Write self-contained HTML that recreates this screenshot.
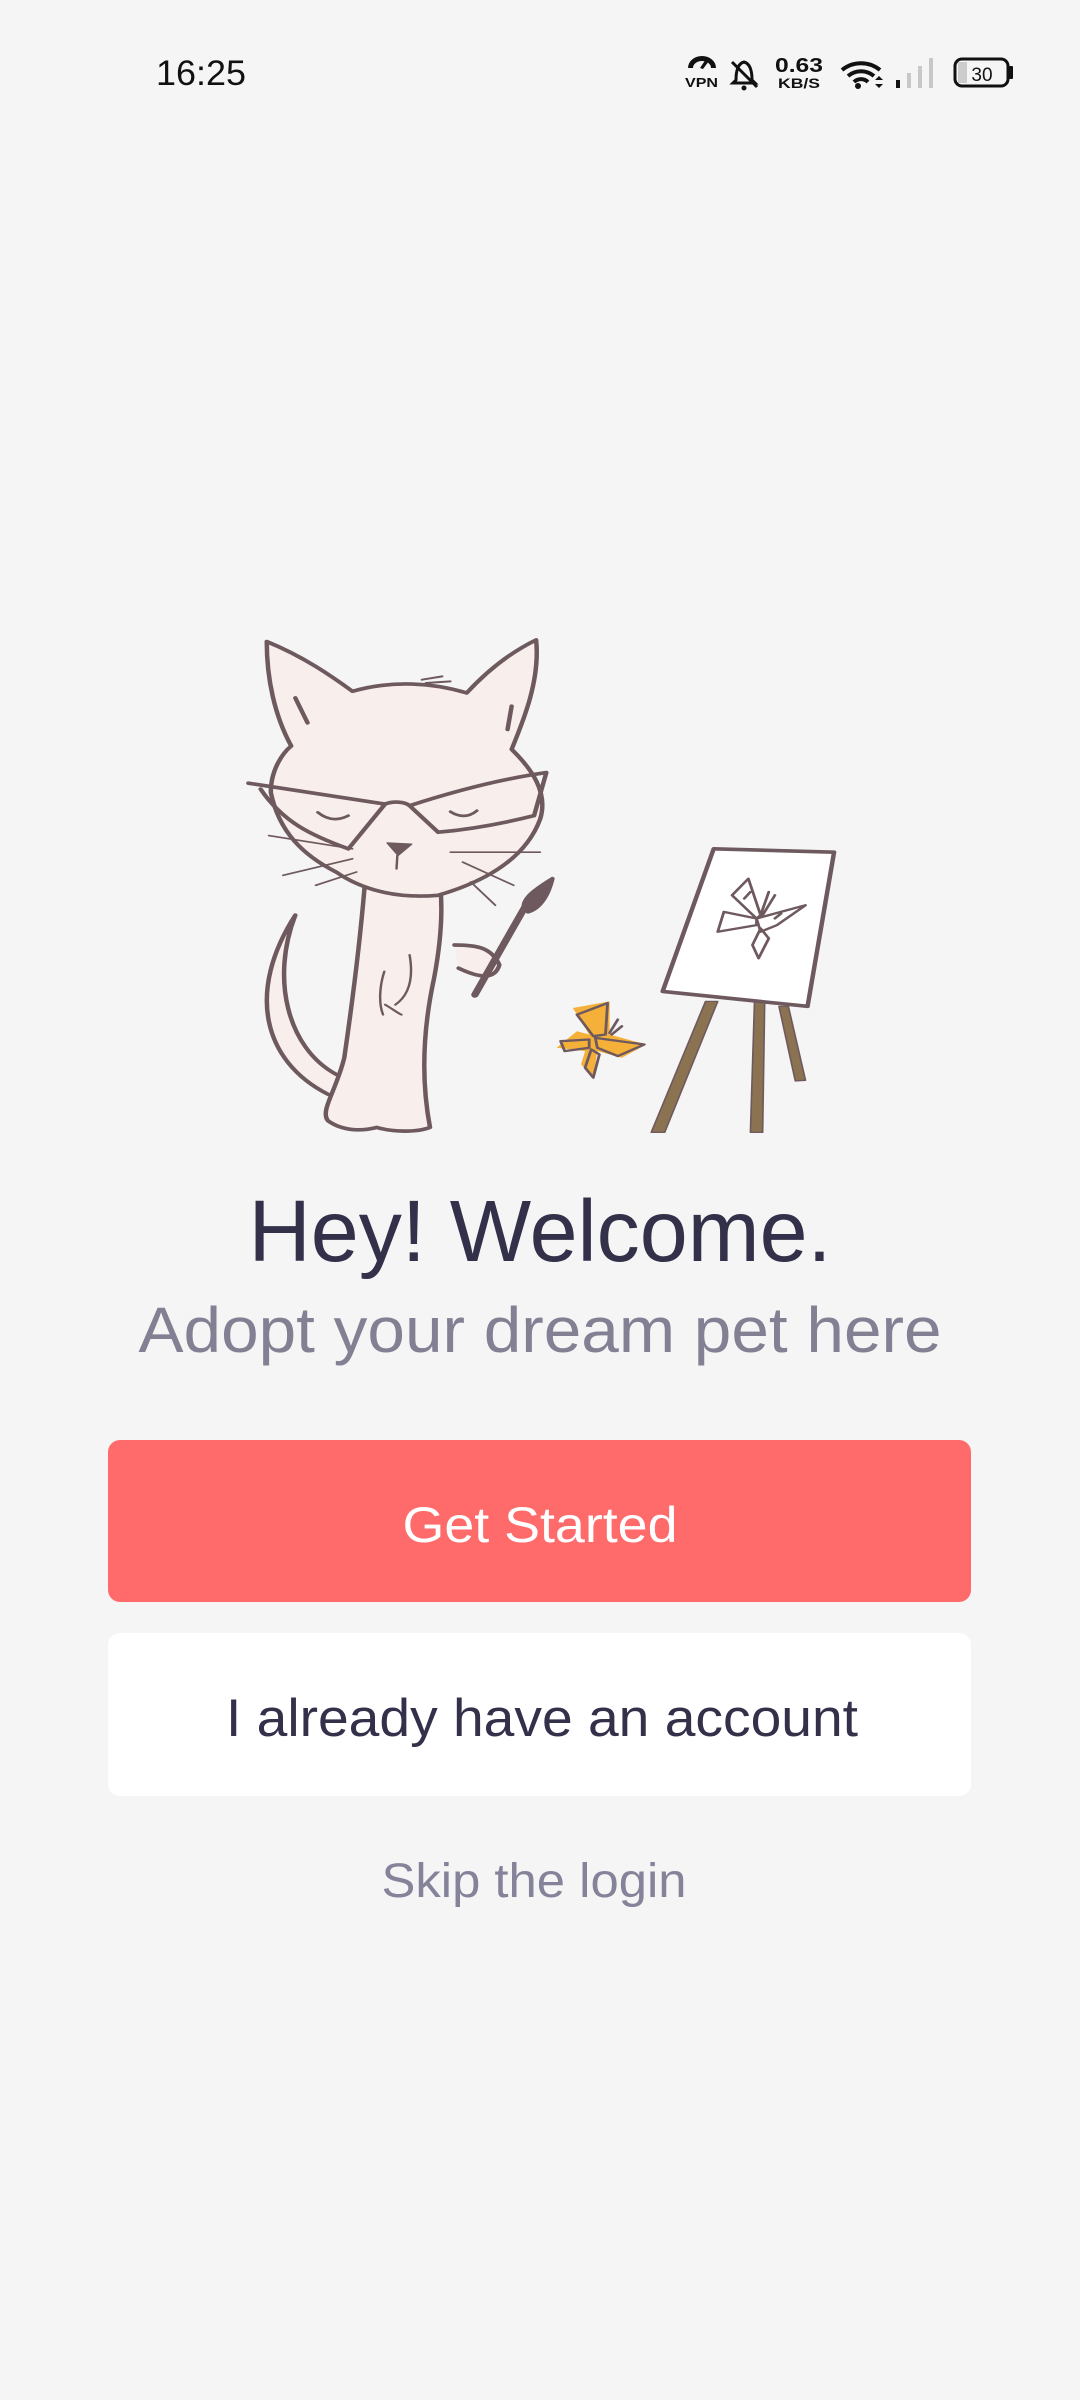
<!DOCTYPE html>
<html><head><meta charset="utf-8"><style>
html,body{margin:0;padding:0;background:#f5f5f5;width:1080px;height:2400px;overflow:hidden}
svg{position:absolute;left:0;top:0}
</style></head><body>
<svg width="1080" height="2400" viewBox="0 0 1080 2400" xmlns="http://www.w3.org/2000/svg" style="font-family:'Liberation Sans','DejaVu Sans',sans-serif">
<text x="156" y="85" font-size="35" fill="#111" textLength="90" lengthAdjust="spacingAndGlyphs">16:25</text>
<g fill="#111">
<path d="M688 68 a14 12 0 0 1 28 0 l-5 0 a9 7 0 0 0 -18 0z"/>
<path d="M700 68 l6 -9 l3 2 l-6 8z"/>
<text x="685" y="87" font-size="13" font-weight="bold" textLength="33" lengthAdjust="spacingAndGlyphs">VPN</text>
<path d="M736 80 q0 -16 8 -18 q8 2 8 18 l3 3 h-22z" fill="none" stroke="#111" stroke-width="3"/>
<line x1="732" y1="62" x2="757" y2="87" stroke="#111" stroke-width="3"/>
<circle cx="744" cy="88" r="2.5"/>
<text x="775" y="72" font-size="20" font-weight="bold" textLength="48" lengthAdjust="spacingAndGlyphs">0.63</text>
<text x="778" y="88" font-size="14" font-weight="bold" textLength="42" lengthAdjust="spacingAndGlyphs">KB/S</text>
<path d="M842 70 a30 30 0 0 1 38 0" fill="none" stroke="#111" stroke-width="4"/>
<path d="M848 76 a20 20 0 0 1 26 0" fill="none" stroke="#111" stroke-width="4"/>
<path d="M854 82 a10 10 0 0 1 14 0" fill="none" stroke="#111" stroke-width="4"/>
<circle cx="858" cy="86" r="3"/>
<path d="M875 80 l4 -4 l4 4z M875 84 l4 4 l4 -4z"/>
<rect x="896" y="80" width="4" height="8"/>
<rect x="907" y="73" width="4" height="15" fill="#c8c8c8"/>
<rect x="918" y="66" width="4" height="22" fill="#c8c8c8"/>
<rect x="929" y="58" width="4" height="30" fill="#c8c8c8"/>
<rect x="955" y="59" width="53" height="27" rx="7" fill="none" stroke="#111" stroke-width="3"/>
<rect x="958" y="62" width="9" height="21" fill="#ccc"/>
<rect x="1009" y="66" width="4" height="13" rx="1"/>
<text x="982" y="81" font-size="19" text-anchor="middle">30</text>
</g>

<text x="540" y="1261" font-size="87" fill="#33304a" text-anchor="middle" textLength="583" lengthAdjust="spacingAndGlyphs">Hey! Welcome.</text>
<text x="540" y="1352" font-size="64" fill="#838094" text-anchor="middle" textLength="803" lengthAdjust="spacingAndGlyphs">Adopt your dream pet here</text>

<rect x="108" y="1440" width="863" height="162" rx="12" fill="#ff6b6b"/>
<text x="540" y="1542" font-size="50" fill="#fff" text-anchor="middle" textLength="275" lengthAdjust="spacingAndGlyphs">Get Started</text>
<rect x="108" y="1633" width="863" height="163" rx="12" fill="#fff"/>
<text x="542" y="1736" font-size="53" fill="#33304a" text-anchor="middle" textLength="632" lengthAdjust="spacingAndGlyphs">I already have an account</text>
<text x="534" y="1897" font-size="48" fill="#858399" text-anchor="middle" textLength="305" lengthAdjust="spacingAndGlyphs">Skip the login</text>
</svg>

<svg style="left:230px;top:620px" width="640" height="520" viewBox="0 0 1568 1568" preserveAspectRatio="none" xmlns="http://www.w3.org/2000/svg">
<g stroke="#6e5a5e" stroke-width="11" stroke-linecap="round" stroke-linejoin="round">
<path d="M240 1430 C80 1330 40 1120 160 890 C100 1080 140 1290 260 1370" fill="#f8eeeb"/>
<path d="M330 800 C320 950 300 1150 280 1320 C260 1420 220 1480 240 1510 C280 1545 330 1540 360 1530 C400 1545 460 1545 490 1530 C470 1400 470 1250 500 1080 C520 950 520 860 515 800Z" fill="#f8eeeb"/>
<path d="M550 980 C600 980 640 985 660 1040 C650 1080 620 1085 560 1050" fill="#f8eeeb"/>
<path d="M90 65 C180 110 250 170 300 215 C400 180 500 190 580 220 C640 140 700 90 750 60 C760 180 720 300 690 390 C740 450 780 520 760 600 C730 700 650 780 510 830 C420 840 330 820 260 760 C180 710 120 640 100 520 C100 450 130 400 150 380 C110 290 90 180 90 65Z" fill="#f8eeeb"/>
<path d="M160 235 L190 310 M690 260 L680 330" fill="none"/>
<path d="M470 180 L520 170 M480 190 L540 185" fill="none" stroke-width="6"/>
<path d="M45 492 L380 555 L290 690 C200 650 130 610 75 510 M440 560 C540 520 660 480 775 460 L745 590 C680 610 600 630 510 640 Z M380 555 C400 545 430 548 440 560" fill="none"/>
<path d="M215 580 Q250 615 290 590 M540 578 Q575 605 605 575" fill="none" stroke-width="8"/>
<path d="M385 672 L445 676 L412 710Z" fill="#6e5a5e" stroke-width="4"/>
<path d="M410 710 L408 750" fill="none" stroke-width="6"/>
<path d="M95 650 L300 690 M130 770 L300 720 M210 800 L310 760 M540 700 L760 700 M570 730 L695 800 M590 790 L650 860" fill="none" stroke-width="5"/>
<path d="M378 1060 C365 1110 365 1160 375 1190 M440 1010 C450 1080 440 1130 405 1160 M380 1160 C395 1170 410 1185 420 1190" fill="none" stroke-width="6"/>
<path d="M600 1130 L725 860" stroke-width="18" fill="none"/>
<path d="M720 870 C715 840 750 810 790 780 C780 830 760 870 730 880Z" fill="#6e5a5e"/>
<g stroke="#6e5a5e" stroke-width="4" fill="#8b7351">
<path d="M1165 1150 L1195 1150 L1065 1545 L1032 1545Z"/>
<path d="M1285 1150 L1310 1150 L1305 1545 L1275 1545Z"/>
<path d="M1345 1165 L1368 1165 L1410 1388 L1385 1390Z"/>
</g>
<path d="M1185 690 L1480 700 L1415 1165 L1060 1120Z" fill="#fff"/>
<g fill="none" stroke-width="7">
<path d="M1290 900 L1230 830 L1270 780 L1300 890 Z"/>
<path d="M1290 900 L1410 860 L1340 920 L1300 940Z"/>
<path d="M1290 900 L1210 880 L1195 940 L1290 920Z"/>
<path d="M1300 930 L1280 980 L1295 1020 L1320 960Z"/>
<path d="M1260 840 L1275 820 M1335 900 L1350 885 M1300 890 L1320 820 M1305 890 L1335 830"/>
</g>
<path d="M880 1250 L840 1170 L930 1150 L930 1250 L1020 1280 L960 1320 L900 1300 L890 1380 L860 1340 L870 1300 L800 1290 L850 1240Z" fill="#f5b03a" stroke="none"/>
<g fill="none" stroke-width="7">
<path d="M890 1255 L850 1190 L925 1155 L920 1250Z"/>
<path d="M895 1260 L1015 1280 L950 1315 L900 1290Z"/>
<path d="M880 1265 L810 1270 L820 1300 L880 1290Z"/>
<path d="M885 1295 L870 1350 L890 1380 L905 1310Z"/>
<path d="M930 1245 L950 1205 M935 1250 L960 1225"/>
</g>
</g>
</svg>
</body></html>
